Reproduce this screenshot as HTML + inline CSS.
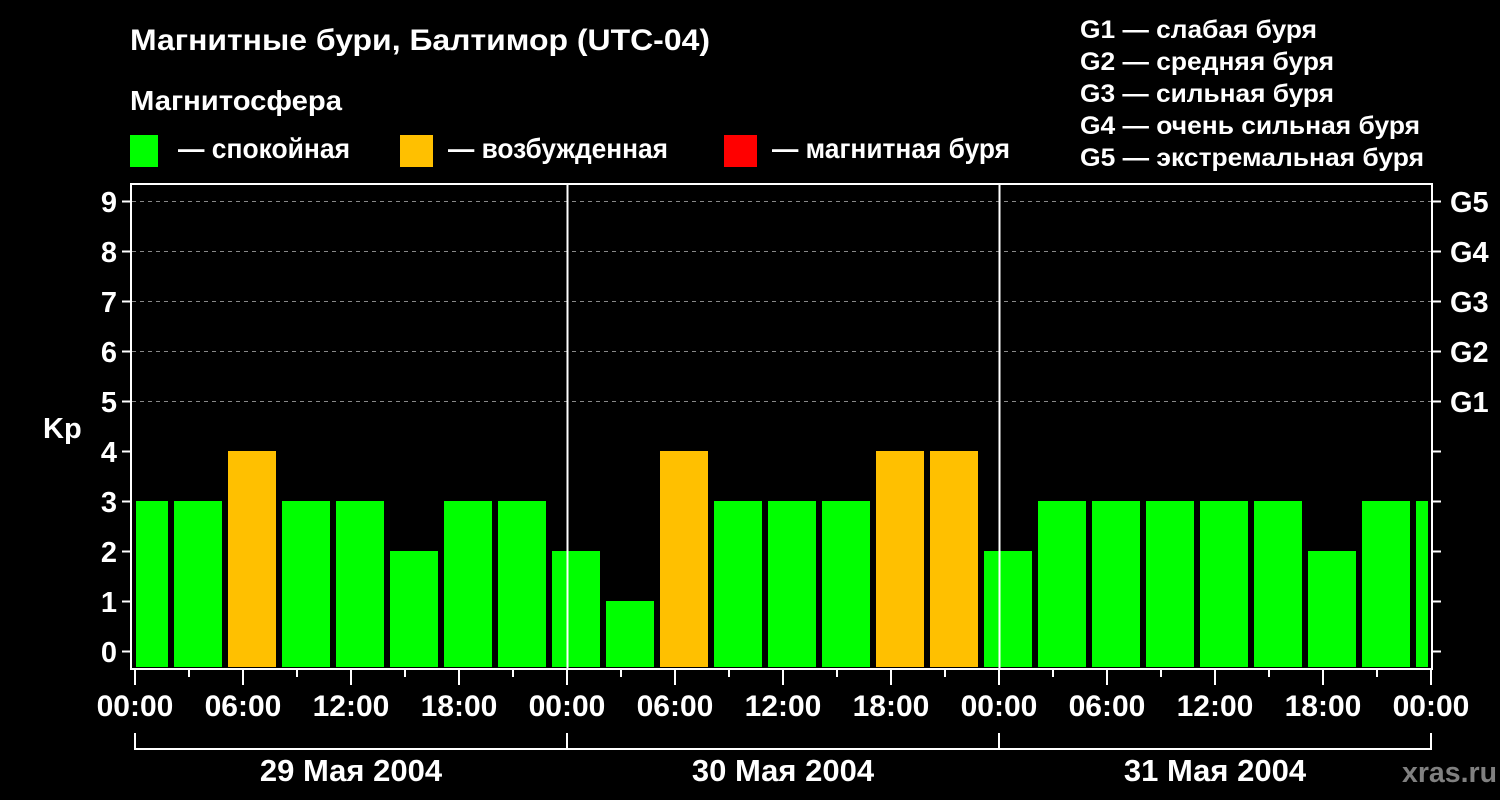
<!DOCTYPE html>
<html><head><meta charset="utf-8"><style>
html,body{margin:0;padding:0;background:#000;width:1500px;height:800px;overflow:hidden}
svg{display:block}
text{font-family:"Liberation Sans",sans-serif;font-weight:bold;fill:#fff}
</style></head><body>
<svg width="1500" height="800" viewBox="0 0 1500 800" xmlns="http://www.w3.org/2000/svg">
<rect width="1500" height="800" fill="#000"/>
<text x="130" y="50" font-size="30" textLength="580" lengthAdjust="spacingAndGlyphs">Магнитные бури, Балтимор (UTC-04)</text>
<text x="130" y="110" font-size="28" textLength="212" lengthAdjust="spacingAndGlyphs">Магнитосфера</text>
<rect x="130" y="135" width="28" height="32" fill="#00ff00"/>
<text x="178" y="158" font-size="28" textLength="172" lengthAdjust="spacingAndGlyphs">— спокойная</text>
<rect x="400" y="135" width="33" height="32" fill="#ffc000"/>
<text x="448" y="158" font-size="28" textLength="220" lengthAdjust="spacingAndGlyphs">— возбужденная</text>
<rect x="724" y="135" width="33" height="32" fill="#ff0000"/>
<text x="772" y="158" font-size="28" textLength="238" lengthAdjust="spacingAndGlyphs">— магнитная буря</text>
<g font-size="25">
<text x="1080" y="38" textLength="237" lengthAdjust="spacingAndGlyphs">G1 — слабая буря</text>
<text x="1080" y="70" textLength="254" lengthAdjust="spacingAndGlyphs">G2 — средняя буря</text>
<text x="1080" y="102" textLength="254" lengthAdjust="spacingAndGlyphs">G3 — сильная буря</text>
<text x="1080" y="134" textLength="340" lengthAdjust="spacingAndGlyphs">G4 — очень сильная буря</text>
<text x="1080" y="166" textLength="344" lengthAdjust="spacingAndGlyphs">G5 — экстремальная буря</text>
</g>
<g stroke="#888" stroke-width="1" stroke-dasharray="4,4">
<line x1="132" y1="201.5" x2="1431" y2="201.5"/>
<line x1="132" y1="251.5" x2="1431" y2="251.5"/>
<line x1="132" y1="301.5" x2="1431" y2="301.5"/>
<line x1="132" y1="351.5" x2="1431" y2="351.5"/>
<line x1="132" y1="401.5" x2="1431" y2="401.5"/>
</g>
<g fill="#00ff00">
<rect x="136" y="501" width="32" height="166"/>
<rect x="174" y="501" width="48" height="166"/>
<rect x="228" y="451" width="48" height="216" fill="#ffc000"/>
<rect x="282" y="501" width="48" height="166"/>
<rect x="336" y="501" width="48" height="166"/>
<rect x="390" y="551" width="48" height="116"/>
<rect x="444" y="501" width="48" height="166"/>
<rect x="498" y="501" width="48" height="166"/>
<rect x="552" y="551" width="48" height="116"/>
<rect x="606" y="601" width="48" height="66"/>
<rect x="660" y="451" width="48" height="216" fill="#ffc000"/>
<rect x="714" y="501" width="48" height="166"/>
<rect x="768" y="501" width="48" height="166"/>
<rect x="822" y="501" width="48" height="166"/>
<rect x="876" y="451" width="48" height="216" fill="#ffc000"/>
<rect x="930" y="451" width="48" height="216" fill="#ffc000"/>
<rect x="984" y="551" width="48" height="116"/>
<rect x="1038" y="501" width="48" height="166"/>
<rect x="1092" y="501" width="48" height="166"/>
<rect x="1146" y="501" width="48" height="166"/>
<rect x="1200" y="501" width="48" height="166"/>
<rect x="1254" y="501" width="48" height="166"/>
<rect x="1308" y="551" width="48" height="116"/>
<rect x="1362" y="501" width="48" height="166"/>
<rect x="1416" y="501" width="12" height="166"/>
</g>
<g stroke="#fff">
<line x1="567.5" y1="183" x2="567.5" y2="668" stroke-width="2"/>
<line x1="999.5" y1="183" x2="999.5" y2="668" stroke-width="2"/>
<rect x="131" y="184" width="1301" height="485" fill="none" stroke-width="2"/>
<path d="M122 201.5H131M122 251.5H131M122 301.5H131M122 351.5H131M122 401.5H131M122 451.5H131M122 501.5H131M122 551.5H131M122 601.5H131M122 651.5H131" stroke-width="2"/>
<path d="M1432 201.5H1441M1432 251.5H1441M1432 301.5H1441M1432 351.5H1441M1432 401.5H1441M1432 451.5H1441M1432 501.5H1441M1432 551.5H1441M1432 601.5H1441M1432 651.5H1441" stroke-width="2"/>
<path d="M135 670V685M243 670V685M351 670V685M459 670V685M567 670V685M675 670V685M783 670V685M891 670V685M999 670V685M1107 670V685M1215 670V685M1323 670V685M1431 670V685" stroke-width="2"/>
<path d="M189 670V677M297 670V677M405 670V677M513 670V677M621 670V677M729 670V677M837 670V677M945 670V677M1053 670V677M1161 670V677M1269 670V677M1377 670V677" stroke-width="2"/>
<path d="M135 733V749M567 733V749M999 733V749M1431 733V749M134 749H1432" stroke-width="2" fill="none"/>
</g>
<g font-size="29" text-anchor="end">
<text x="117" y="212">9</text><text x="117" y="262">8</text><text x="117" y="312">7</text>
<text x="117" y="362">6</text><text x="117" y="412">5</text><text x="117" y="462">4</text>
<text x="117" y="512">3</text><text x="117" y="562">2</text><text x="117" y="612">1</text>
<text x="117" y="662">0</text>
</g>
<text x="43" y="438" font-size="29">Kp</text>
<g font-size="29">
<text x="1450" y="212">G5</text><text x="1450" y="262">G4</text><text x="1450" y="312">G3</text>
<text x="1450" y="362">G2</text><text x="1450" y="412">G1</text>
</g>
<g font-size="30" text-anchor="middle">
<text x="135" y="716">00:00</text><text x="243" y="716">06:00</text><text x="351" y="716">12:00</text><text x="459" y="716">18:00</text>
<text x="567" y="716">00:00</text><text x="675" y="716">06:00</text><text x="783" y="716">12:00</text><text x="891" y="716">18:00</text>
<text x="999" y="716">00:00</text><text x="1107" y="716">06:00</text><text x="1215" y="716">12:00</text><text x="1323" y="716">18:00</text>
<text x="1431" y="716">00:00</text>
</g>
<g font-size="31" text-anchor="middle">
<text x="351" y="781">29 Мая 2004</text>
<text x="783" y="781">30 Мая 2004</text>
<text x="1215" y="781">31 Мая 2004</text>
</g>
<text x="1402" y="782" font-size="29" style="fill:#808080" textLength="95" lengthAdjust="spacingAndGlyphs">xras.ru</text>
</svg>
</body></html>
